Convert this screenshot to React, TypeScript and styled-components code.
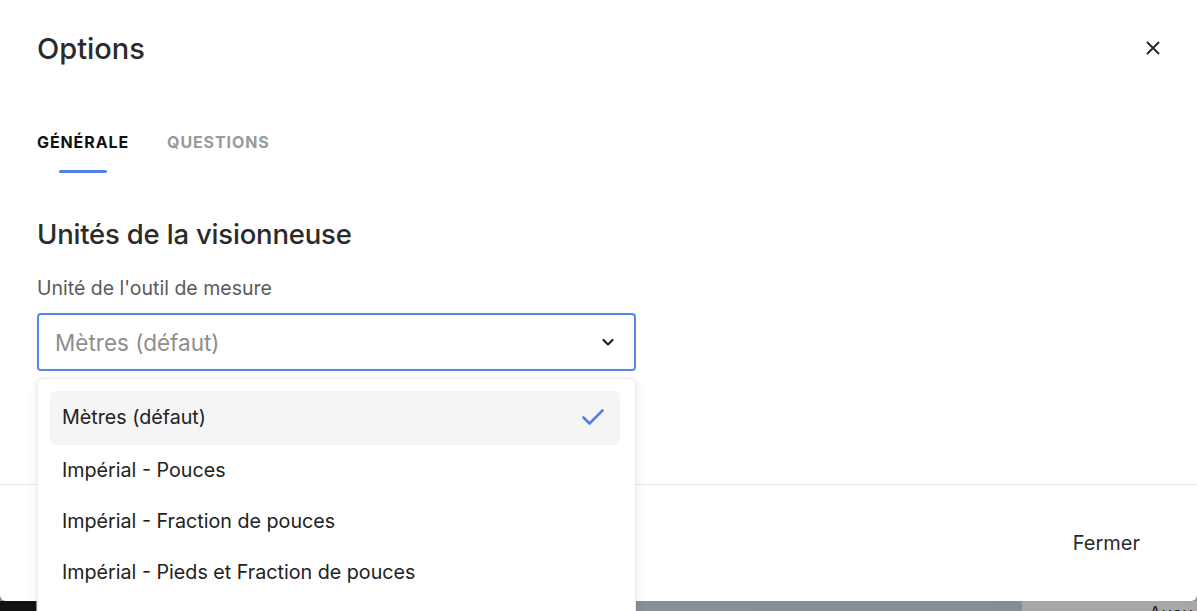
import React from "react";
import styled, { createGlobalStyle } from "styled-components";

const GlobalStyle = createGlobalStyle`
  html, body {
    margin: 0;
    padding: 0;
    overflow: hidden;
    background: #8a9096;
  }
  * { box-sizing: border-box; }
`;

const Page = styled.div`
  width: 1197px;
  height: 611px;
  position: relative;
  font-family: Inter, "Noto Sans", sans-serif;
  color: #2b2b2b;
  overflow: hidden;
`;

const Modal = styled.div`
  height: 601px;
  background: #fff;
  border-radius: 0 0 6px 6px;
  display: flex;
  flex-direction: column;
`;

const Header = styled.div`
  display: flex;
  align-items: center;
  justify-content: space-between;
  padding: 30px 36px 0 37px;
  height: 66px;
`;

const Title = styled.h1`
  margin: 0;
  font-size: 29px;
  font-weight: 500;
  color: #2b2b2b;
`;

const CloseButton = styled.button`
  border: none;
  background: none;
  padding: 0;
  width: 16px;
  height: 16px;
  display: flex;
  align-items: center;
  justify-content: center;
  cursor: pointer;
`;

const Tabs = styled.div`
  display: flex;
  gap: 38px;
  padding: 0 37px;
  margin-top: 66px;
`;

const Tab = styled.div<{ $active?: boolean }>`
  position: relative;
  font-size: 16px;
  font-weight: 700;
  letter-spacing: 0.9px;
  color: ${(p) => (p.$active ? "#111" : "#9a9a9a")};
  padding-bottom: 21px;
  &::after {
    content: "";
    display: ${(p) => (p.$active ? "block" : "none")};
    position: absolute;
    left: 50%;
    bottom: 0;
    width: 48px;
    height: 3px;
    margin-left: -24px;
    border-radius: 2px;
    background: #4f80ea;
  }
`;

const Body = styled.div`
  padding: 0 37px;
  height: 311px;
`;

const SectionTitle = styled.h2`
  margin: 44px 0 0;
  font-size: 27.5px;
  font-weight: 500;
  color: #2b2b2b;
  letter-spacing: -0.2px;
`;

const Label = styled.div`
  margin-top: 25px;
  font-size: 19.5px;
  color: #5a5a5a;
`;

const SelectWrap = styled.div`
  position: relative;
  width: 599px;
  margin-top: 13px;
`;

const SelectBox = styled.div`
  height: 58px;
  border: 2.5px solid #5886ef;
  border-radius: 4px;
  display: flex;
  align-items: center;
  justify-content: space-between;
  padding: 0 19px 0 16px;
  font-size: 22.5px;
  color: #8e8e8e;
`;

const Menu = styled.div`
  position: absolute;
  top: 65px;
  left: 0;
  width: 599px;
  height: 260px;
  background: #fff;
  border: 1px solid #ececec;
  border-radius: 6px;
  box-shadow: 0 2px 10px rgba(0, 0, 0, 0.1);
  padding: 12px 15px 0 12px;
  z-index: 2;
`;

const Option = styled.div<{ $selected?: boolean }>`
  height: ${(p) => (p.$selected ? "54px" : "51px")};
  display: flex;
  align-items: center;
  justify-content: space-between;
  padding: 0 15px 2px 12px;
  border-radius: 6px;
  background: ${(p) => (p.$selected ? "#f5f5f5" : "transparent")};
  font-size: 19.7px;
  color: #222;
`;

const Divider = styled.div`
  height: 1px;
  background: #e9e9e9;
`;

const Footer = styled.div`
  flex: 1;
  display: flex;
  align-items: center;
  justify-content: flex-end;
  padding: 0 57px 0 0;
`;

const TextButton = styled.button`
  border: none;
  background: none;
  font-family: inherit;
  font-size: 20px;
  color: #2b2b2b;
  padding: 0;
  cursor: pointer;
`;

const Backdrop = styled.div`
  height: 10px;
  display: flex;
`;

const Dark = styled.div`
  width: 36px;
  background: #121212;
`;

const Grey = styled.div`
  flex: 1;
  background: linear-gradient(90deg, #8c949c, #878d94);
`;

const Light = styled.div`
  width: 175px;
  background: #a7a7a7;
  font-size: 18px;
  color: #222;
  padding-left: 127px;
  line-height: 26px;
  overflow: hidden;
`;

const options = [
  "Mètres (défaut)",
  "Impérial - Pouces",
  "Impérial - Fraction de pouces",
  "Impérial - Pieds et Fraction de pouces",
];

export default function App() {
  return (
    <>
      <GlobalStyle />
      <Page>
        <Modal>
          <Header>
            <Title>Options</Title>
            <CloseButton aria-label="Fermer">
              <svg width="14" height="14" viewBox="0 0 14 14">
                <path d="M1.5 1.5 L12.5 12.5 M12.5 1.5 L1.5 12.5" stroke="#2b2b2b" strokeWidth="2" strokeLinecap="round" />
              </svg>
            </CloseButton>
          </Header>
          <Tabs>
            <Tab $active>GÉNÉRALE</Tab>
            <Tab>QUESTIONS</Tab>
          </Tabs>
          <Body>
            <SectionTitle>Unités de la visionneuse</SectionTitle>
            <Label>Unité de l'outil de mesure</Label>
            <SelectWrap>
              <SelectBox>
                <span>Mètres (défaut)</span>
                <svg width="14" height="10" viewBox="0 0 14 10">
                  <path d="M2.5 3 L7 7.5 L11.5 3" fill="none" stroke="#222" strokeWidth="2.2" strokeLinecap="round" strokeLinejoin="round" />
                </svg>
              </SelectBox>
              <Menu>
                {options.map((o, i) => (
                  <Option key={o} $selected={i === 0}>
                    <span>{o}</span>
                    {i === 0 && (
                      <svg width="24" height="20" viewBox="0 0 24 20">
                        <path d="M2.5 10.5 L8.5 16.5 L21.5 3.5" fill="none" stroke="#4f80ea" strokeWidth="2.6" strokeLinecap="round" strokeLinejoin="round" />
                      </svg>
                    )}
                  </Option>
                ))}
              </Menu>
            </SelectWrap>
          </Body>
          <Divider />
          <Footer>
            <TextButton>Fermer</TextButton>
          </Footer>
        </Modal>
        <Backdrop>
          <Dark />
          <Grey />
          <Light>Aucu</Light>
        </Backdrop>
      </Page>
    </>
  );
}
